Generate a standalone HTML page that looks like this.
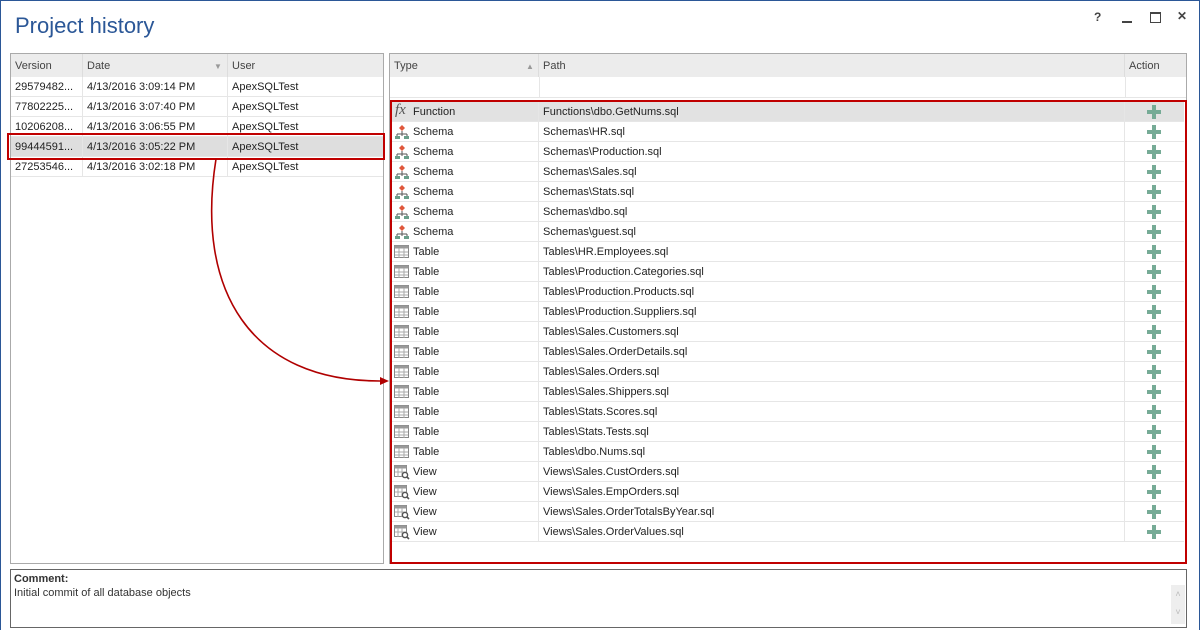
<!DOCTYPE html><html><head><style>
body{margin:0;width:1200px;height:629px;background:#fff;position:relative;overflow:hidden;font-family:"Liberation Sans",sans-serif;font-size:11px;color:#222}
.win{position:absolute;left:0;top:0;width:1198px;height:629px;border-left:1px solid #2b5797;border-right:1px solid #2b5797;border-top:1px solid #2b5797}
.t{position:absolute;left:15px;top:13px;font-size:22px;color:#2b5797}
.ab{position:absolute}
.box{position:absolute;border:1px solid #aaa;background:#fff}
.hdr{position:absolute;left:0;right:0;top:0;height:23px;background:#ececec}
.row{position:absolute;left:0;height:19px;border-bottom:1px solid #e6e6e6;line-height:19px;white-space:nowrap}
.c{position:absolute;top:0;height:100%;border-right:1px solid #e6e6e6;padding-left:4px;padding-top:1px;box-sizing:border-box}
.hc{position:absolute;top:0;height:23px;line-height:23px;padding-left:4px;padding-top:1px;color:#444;border-right:1px solid #ddd;box-sizing:border-box}
</style></head><body>
<div class="win"></div>
<div class="t">Project history</div>
<div class="ab" style="left:1094px;top:10px;font-weight:bold;color:#444;font-size:12px">?</div>
<div class="ab" style="left:1122px;top:21px;width:10px;height:2px;background:#444"></div>
<div class="ab" style="left:1150px;top:12px;width:9px;height:8px;border:1px solid #444;border-top-width:2px"></div>
<div class="ab" style="left:1177px;top:9px;font-size:12px;color:#444;font-weight:bold">✕</div>

<div class="box" style="left:10px;top:53px;width:372px;height:509px">
<div class="hdr"></div>
<div class="hc" style="left:0;width:72px">Version</div>
<div class="hc" style="left:72px;width:145px">Date<span style="position:absolute;left:131px;top:1px;font-size:8px;color:#999">▼</span></div>
<div class="hc" style="left:217px;width:155px;border:0">User</div>
</div>
<div id="lrows"></div>

<div class="box" style="left:389px;top:53px;width:796px;height:509px">
<div class="hdr"></div>
<div class="hc" style="left:0;width:149px">Type<span style="position:absolute;left:136px;top:1px;font-size:8px;color:#999">▲</span></div>
<div class="hc" style="left:149px;width:586px">Path</div>
<div class="hc" style="left:735px;width:60px;border:0;padding-left:4px">Action</div>
<div style="position:absolute;left:0;right:0;top:23px;height:20px;border-bottom:1px solid #e6e6e6"><div style="position:absolute;left:149px;top:0;height:20px;border-left:1px solid #e6e6e6"></div><div style="position:absolute;left:735px;top:0;height:20px;border-left:1px solid #e6e6e6"></div></div>
</div>
<div id="rrows"></div>
<div class="ab" style="left:390px;top:100px;width:793px;height:460px;border:2px solid #c00000"></div>
<div class="ab" style="left:7px;top:133px;width:374px;height:23px;border:2px solid #c00000"></div>

<div class="box" style="left:10px;top:569px;width:1175px;height:57px;border-color:#666">
<div style="position:absolute;left:3px;top:3px;font-weight:bold;color:#333">Comment:</div>
<div style="position:absolute;left:3px;top:17px;color:#333">Initial commit of all database objects</div>
<div style="position:absolute;left:1160px;top:15px;width:14px;height:39px;background:#eee;color:#bbb;font-size:9px;text-align:center;line-height:18px">˄<br>˅</div>
</div>

<svg class="ab" style="left:0;top:0" width="1200" height="629"><path d="M216 159 C 195 290, 250 382, 382 381" fill="none" stroke="#b00000" stroke-width="1.6"/><path d="M389 381 L380 377 L380 385 Z" fill="#b00000"/></svg>

<script>
var L=[["29579482...","4/13/2016 3:09:14 PM"],["77802225...","4/13/2016 3:07:40 PM"],["10206208...","4/13/2016 3:06:55 PM"],["99444591...","4/13/2016 3:05:22 PM"],["27253546...","4/13/2016 3:02:18 PM"]];
var h="";L.forEach(function(r,i){h+='<div class="row" style="left:11px;width:372px;top:'+(77+i*20)+'px;'+(i==3?'background:#dedede':'')+'"><div class="c" style="left:0;width:72px">'+r[0]+'</div><div class="c" style="left:72px;width:145px">'+r[1]+'</div><div class="c" style="left:217px;width:155px;border:0">ApexSQLTest</div></div>'});
document.getElementById("lrows").innerHTML=h;
var R=[["F","Function","Functions\\dbo.GetNums.sql"]];
["HR","Production","Sales","Stats","dbo","guest"].forEach(function(s){R.push(["S","Schema","Schemas\\"+s+".sql"])});
["HR.Employees","Production.Categories","Production.Products","Production.Suppliers","Sales.Customers","Sales.OrderDetails","Sales.Orders","Sales.Shippers","Stats.Scores","Stats.Tests","dbo.Nums"].forEach(function(s){R.push(["T","Table","Tables\\"+s+".sql"])});
["Sales.CustOrders","Sales.EmpOrders","Sales.OrderTotalsByYear","Sales.OrderValues"].forEach(function(s){R.push(["V","View","Views\\"+s+".sql"])});
var ic={F:'<span style="font-family:Liberation Serif;font-style:italic;font-size:15px;color:#555;position:absolute;left:3px;top:-1px">fx</span>',
S:'<svg style="position:absolute;left:2px;top:2px" width="16" height="16"><path d="M8 1 L11 4 L8 7 L5 4Z" fill="#e0573b"/><path d="M8 7V10M3 10H13M3 10V12M13 10V12M8 10V12" stroke="#555" fill="none"/><rect x="1" y="12" width="5" height="3" fill="#6a9e8a"/><rect x="10" y="12" width="5" height="3" fill="#6a9e8a"/></svg>',
T:'<svg style="position:absolute;left:2px;top:3px" width="16" height="14"><rect x="0.5" y="0.5" width="14" height="12" fill="#fff" stroke="#888"/><rect x="0.5" y="0.5" width="14" height="3" fill="#999"/><path d="M5 3V13M10 3V13M1 7H14M1 10H14" stroke="#aaa"/></svg>',
V:'<svg style="position:absolute;left:2px;top:3px" width="16" height="15"><rect x="0.5" y="0.5" width="12" height="11" fill="#fff" stroke="#888"/><rect x="0.5" y="0.5" width="12" height="3" fill="#999"/><path d="M4 3V12M8 3V12M1 7H12" stroke="#aaa"/><circle cx="11" cy="10" r="2.6" fill="#fff" stroke="#555" stroke-width="1.4"/><path d="M13 12L15 14" stroke="#555" stroke-width="1.6"/></svg>'};
h="";R.forEach(function(r,i){var t=102+i*20;h+='<div class="row" style="left:392px;width:792px;top:'+t+'px;'+(i==0?'background:#e2e2e2':'')+'"><div class="c" style="left:0;width:147px;padding-left:21px">'+ic[r[0]]+r[1]+'</div><div class="c" style="left:147px;width:586px">'+r[2]+'</div><div class="c" style="left:733px;width:59px;border:0"><svg style="position:absolute;left:22px;top:3px" width="14" height="14"><path d="M5 0H9V5H14V9H9V14H5V9H0V5H5Z" fill="#76ab96"/></svg></div></div>'});
document.getElementById("rrows").innerHTML=h;
</script>
</body></html>
